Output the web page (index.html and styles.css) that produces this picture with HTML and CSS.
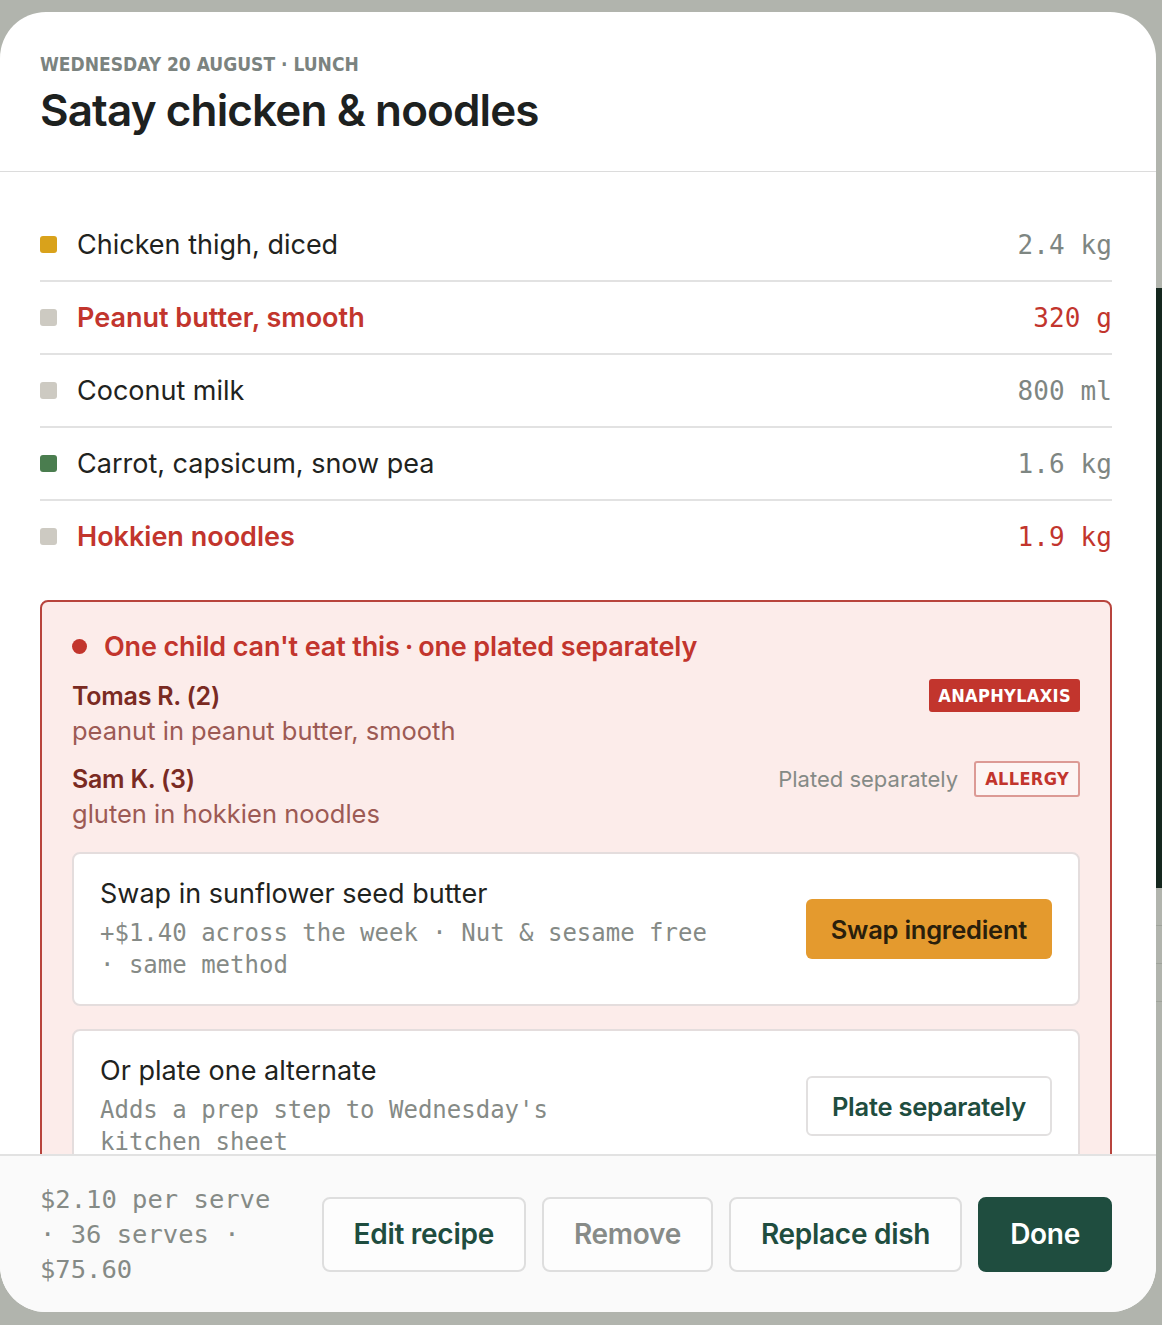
FILE: index.html
```html
<!DOCTYPE html>
<html lang="en">
<head>
<meta charset="utf-8">
<title>Satay chicken &amp; noodles</title>
<link rel="stylesheet" href="styles.css">
</head>
<body>
<div class="backdrop">
  <div class="app-strip"></div>
  <div class="app-rows">
    <div class="app-row"></div>
    <div class="app-row"></div>
    <div class="app-row"></div>
  </div>
</div>

<div class="sheet">
  <header class="sheet-head">
    <div class="eyebrow">WEDNESDAY 20 AUGUST · LUNCH</div>
    <h1 class="title">Satay chicken &amp; noodles</h1>
  </header>

  <div class="sheet-body">
    <ul class="ingredients">
      <li class="ing">
        <span class="swatch swatch-yellow"></span>
        <span class="ing-name">Chicken thigh, diced</span>
        <span class="ing-qty">2.4 kg</span>
      </li>
      <li class="ing ing-flag">
        <span class="swatch swatch-grey"></span>
        <span class="ing-name">Peanut butter, smooth</span>
        <span class="ing-qty">320 g</span>
      </li>
      <li class="ing">
        <span class="swatch swatch-grey"></span>
        <span class="ing-name">Coconut milk</span>
        <span class="ing-qty">800 ml</span>
      </li>
      <li class="ing">
        <span class="swatch swatch-green"></span>
        <span class="ing-name">Carrot, capsicum, snow pea</span>
        <span class="ing-qty">1.6 kg</span>
      </li>
      <li class="ing ing-flag">
        <span class="swatch swatch-grey"></span>
        <span class="ing-name">Hokkien noodles</span>
        <span class="ing-qty">1.9 kg</span>
      </li>
    </ul>

    <section class="alert">
      <div class="alert-head">
        <span class="alert-dot"></span>
        <span>One child can't eat this<span class="sep">·</span>one plated separately</span>
      </div>

      <div class="person">
        <div class="person-line">
          <span class="person-name">Tomas R. (2)</span>
          <span class="tag tag-solid">ANAPHYLAXIS</span>
        </div>
        <div class="person-detail">peanut in peanut butter, smooth</div>
      </div>

      <div class="person">
        <div class="person-line">
          <span class="person-name">Sam K. (3)</span>
          <span class="person-right">
            <span class="person-note">Plated separately</span>
            <span class="tag tag-outline">ALLERGY</span>
          </span>
        </div>
        <div class="person-detail">gluten in hokkien noodles</div>
      </div>

      <div class="option">
        <div class="option-text">
          <div class="option-title">Swap in sunflower seed butter</div>
          <div class="option-desc option-desc-wide">+$1.40 across the week · Nut &amp; sesame free · same method</div>
        </div>
        <button class="btn btn-swap">Swap ingredient</button>
      </div>

      <div class="option">
        <div class="option-text">
          <div class="option-title">Or plate one alternate</div>
          <div class="option-desc option-desc-narrow">Adds a prep step to Wednesday's kitchen sheet</div>
        </div>
        <button class="btn btn-plate">Plate separately</button>
      </div>
    </section>
  </div>

  <footer class="sheet-foot">
    <div class="cost">$2.10 per serve · 36 serves · $75.60</div>
    <div class="actions">
      <button class="btn btn-foot">Edit recipe</button>
      <button class="btn btn-foot btn-muted">Remove</button>
      <button class="btn btn-foot">Replace dish</button>
      <button class="btn btn-foot btn-done">Done</button>
    </div>
  </footer>
</div>
</body>
</html>
```

FILE: styles.css
```css
* { box-sizing: border-box; }

html, body {
  margin: 0;
  padding: 0;
}

body {
  width: 1162px;
  height: 1325px;
  overflow: hidden;
  background: #b1b4ad;
  font-family: "Inter", "Noto Sans", sans-serif;
  color: #1f2320;
  position: relative;
}

/* background application peeking out on the right */
.backdrop {
  position: absolute;
  inset: 0;
  z-index: 0;
}
.app-strip {
  position: absolute;
  left: 1150px;
  top: 288px;
  width: 20px;
  height: 600px;
  background: #15271e;
}
.app-rows {
  position: absolute;
  left: 1150px;
  top: 888px;
  width: 20px;
  display: flex;
  flex-direction: column;
}
.app-row {
  height: 38px;
  border-bottom: 1px solid #9fa39b;
}

/* sheet */
.sheet {
  position: relative;
  z-index: 1;
  margin-top: 12px;
  width: 1156px;
  height: 1300px;
  background: #ffffff;
  border-radius: 46px;
  overflow: hidden;
  display: flex;
  flex-direction: column;
}

.sheet-head {
  flex: none;
  padding: 40px 40px 35px;
  border-bottom: 1px solid #dcdcdc;
}

.eyebrow {
  font-family: "DejaVu Sans Condensed", "DejaVu Sans", sans-serif;
  font-stretch: condensed;
  font-weight: 700;
  font-size: 19px;
  line-height: 24px;
  letter-spacing: 0;
  color: #7b837f;
}

.title {
  margin: 8px 0 0;
  font-size: 44px;
  line-height: 52px;
  font-weight: 600;
  letter-spacing: -0.02em;
  color: #1d211f;
}

.sheet-body {
  flex: 1;
  min-height: 0;
  overflow: hidden;
  padding: 37px 44px 0 40px;
}

/* ingredients */
.ingredients {
  list-style: none;
  margin: 0;
  padding: 0;
}
.ing {
  display: flex;
  align-items: center;
  height: 73px;
  border-bottom: 2px solid #e2e2e2;
}
.ing:last-child {
  border-bottom: none;
  height: 71px;
}
.swatch {
  width: 17px;
  height: 17px;
  border-radius: 3px;
  margin-right: 20px;
  flex: none;
}
.swatch-yellow { background: #d9a21b; }
.swatch-grey { background: #cdcac2; }
.swatch-green { background: #4a7d4f; }

.ing-name {
  flex: 1;
  font-size: 27px;
  font-weight: 400;
  letter-spacing: 0;
  color: #1f2320;
}
.ing-qty {
  font-family: "DejaVu Sans Mono", "Liberation Mono", monospace;
  font-size: 26px;
  letter-spacing: 0.1px;
  color: #7e8682;
}
.ing-flag .ing-name {
  color: #c2352d;
  font-weight: 600;
}
.ing-flag .ing-qty {
  color: #c2352d;
}

/* alert */
.alert {
  margin-top: 28px;
  border: 2px solid #b8443d;
  border-radius: 8px;
  background: #fcecea;
  padding: 26px 30px 40px;
}
.alert-head {
  display: flex;
  align-items: center;
  height: 36px;
  font-size: 27px;
  font-weight: 600;
  letter-spacing: -0.005em;
  color: #c2352d;
}
.sep {
  margin: 0 5px;
}
.alert-dot {
  width: 15px;
  height: 15px;
  border-radius: 50%;
  background: #c2352d;
  margin-right: 17px;
  flex: none;
}

.person {
  margin-top: 14px;
}
.person + .person {
  margin-top: 13px;
}
.person-line {
  display: flex;
  align-items: center;
  justify-content: space-between;
  height: 35px;
}
.person-name {
  font-size: 25px;
  font-weight: 600;
  letter-spacing: -0.01em;
  color: #7a2a22;
}
.person-detail {
  font-size: 25.5px;
  line-height: 35px;
  color: #9c5a54;
  letter-spacing: 0;
}
.person-right {
  display: flex;
  align-items: center;
  gap: 16px;
}
.person-note {
  font-size: 22px;
  color: #858a86;
  letter-spacing: 0;
}

.tag {
  font-family: "DejaVu Sans Condensed", "DejaVu Sans", sans-serif;
  font-stretch: condensed;
  font-weight: 700;
  font-size: 18px;
  letter-spacing: 0.02em;
  display: inline-flex;
  align-items: center;
  justify-content: center;
  border-radius: 3px;
}
.tag-solid {
  height: 33px;
  padding: 0 9px;
  background: #c2352d;
  color: #ffffff;
}
.tag-outline {
  height: 36px;
  padding: 0 9px;
  border: 2px solid #dc9a95;
  color: #c2352d;
  background: #fdf4f3;
}

/* option cards */
.option {
  margin-top: 21px;
  background: #ffffff;
  border: 2px solid #e4dddd;
  border-radius: 8px;
  padding: 23px 26px 23px;
  display: flex;
  align-items: center;
  justify-content: space-between;
}
.option + .option {
  margin-top: 23px;
}
.option-title {
  font-size: 27px;
  line-height: 34px;
  letter-spacing: 0;
  color: #1f2320;
}
.option-desc {
  margin-top: 6px;
  font-family: "DejaVu Sans Mono", "Liberation Mono", monospace;
  font-size: 24px;
  line-height: 32px;
  color: #858a86;
}
.option-desc-wide { max-width: 625px; }
.option-desc-narrow { max-width: 500px; }

.btn {
  font-family: "Inter", "Noto Sans", sans-serif;
  font-weight: 600;
  cursor: pointer;
  letter-spacing: -0.01em;
}
.btn-swap {
  height: 60px;
  padding: 0 25px;
  border: none;
  border-radius: 6px;
  background: #e49a2e;
  color: #2a1f0c;
  font-size: 25.5px;
}
.btn-plate {
  height: 60px;
  padding: 0 24px;
  border: 2px solid #e2e0e0;
  border-radius: 6px;
  background: #ffffff;
  color: #1f4d3f;
  font-size: 25.5px;
}

/* footer */
.sheet-foot {
  flex: none;
  height: 158px;
  border-top: 2px solid #e2e2e2;
  background: #fafafa;
  padding: 0 44px 0 40px;
  display: flex;
  align-items: center;
  gap: 40px;
}
.cost {
  flex: 1;
  min-width: 0;
  font-family: "DejaVu Sans Mono", "Liberation Mono", monospace;
  font-size: 25.5px;
  line-height: 35px;
  color: #858a86;
}
.actions {
  flex: none;
  display: flex;
  gap: 16px;
}
.btn-foot {
  height: 75px;
  padding: 0 30px;
  border: 2px solid #dedede;
  border-radius: 8px;
  background: #fdfdfd;
  color: #1f4d3f;
  font-size: 28px;
}
.btn-muted {
  color: #878b88;
}
.btn-done {
  background: #1f4d3f;
  border-color: #1f4d3f;
  color: #ffffff;
}
```
